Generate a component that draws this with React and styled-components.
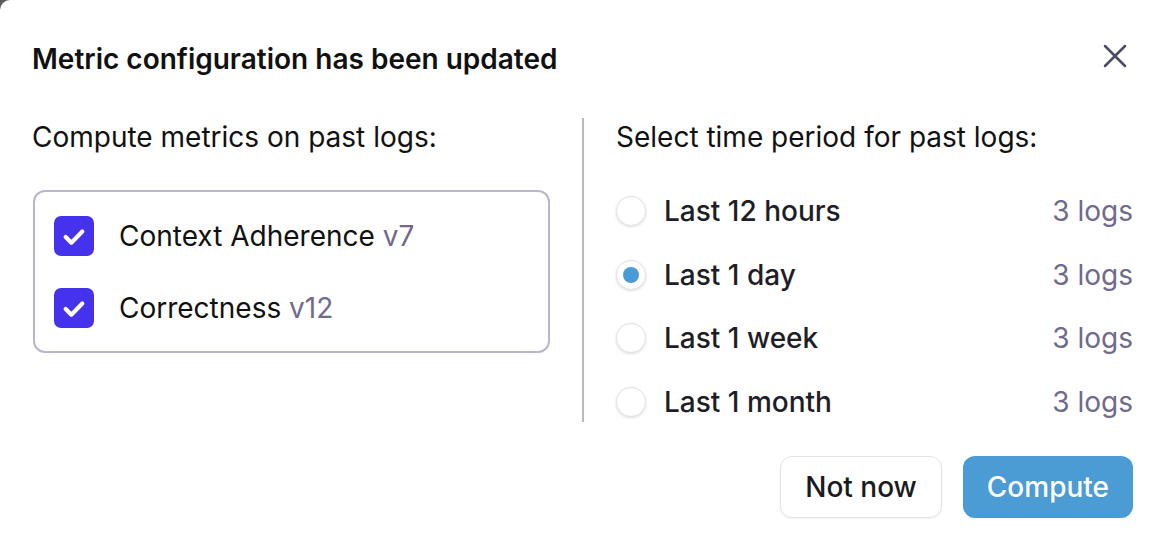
import React, {useState} from 'react'
import styled, {createGlobalStyle} from 'styled-components'

const GlobalStyle = createGlobalStyle`
  html, body {
    margin: 0;
    padding: 0;
    background: #5c5c5c;
  }
  body {
    font-family: Inter, "Noto Sans", sans-serif;
    -webkit-font-smoothing: antialiased;
  }
`

const Modal = styled.div`
  background: #fff;
  border-top-left-radius: 10px;
  box-sizing: border-box;
  height: 546px;
  padding: 41px 29px 28px 32px;
  width: 1162px;
`

const Header = styled.div`
  align-items: center;
  display: flex;
  height: 36px;
  justify-content: space-between;
`

const Title = styled.h2`
  color: #111;
  font-size: 28px;
  font-weight: 600;
  line-height: 34px;
  margin: 0;
`

const CloseButton = styled.button`
  align-items: center;
  background: none;
  border: 0;
  color: #4a4a62;
  cursor: pointer;
  display: flex;
  height: 36px;
  justify-content: center;
  margin-bottom: 6px;
  padding: 0;
  width: 36px;
`

const Columns = styled.div`
  display: grid;
  grid-template-columns: 518px 2px 1fr;
  column-gap: 32px;
  height: 304px;
  margin-top: 41px;
`

const Column = styled.div`
  display: flex;
  flex-direction: column;
`

const Divider = styled.div`
  background: #b8b6cc;
  width: 2px;
`

const Heading = styled.p`
  color: #111;
  font-size: 28px;
  font-weight: 400;
  line-height: 38px;
  margin: 0;
`

const MetricBox = styled.div`
  border: 2px solid #b8b6cc;
  border-radius: 12px;
  display: flex;
  flex-direction: column;
  gap: 32px;
  margin-left: 1px;
  margin-top: 34px;
  padding: 24px 19px 23px;
`

const MetricRow = styled.label`
  align-items: center;
  cursor: pointer;
  display: flex;
  gap: 25px;
  height: 40px;
`

const CheckBox = styled.span`
  align-items: center;
  background: #4532ec;
  border-radius: 7px;
  display: flex;
  flex-shrink: 0;
  height: 40px;
  justify-content: center;
  width: 40px;
`

const MetricName = styled.span`
  color: #111;
  font-size: 28px;
  line-height: 34px;
`

const Version = styled.span`
  color: #6f6b8c;
`

const PeriodList = styled.div`
  display: flex;
  flex-direction: column;
  gap: 23.5px;
  margin-top: 35px;
`

const PeriodRow = styled.label`
  align-items: center;
  cursor: pointer;
  display: flex;
  height: 40px;
`

const Radio = styled.span`
  align-items: center;
  background: #fff;
  border: 1px solid #e4e4e8;
  border-radius: 50%;
  box-shadow: 0 1px 3px rgba(0, 0, 0, 0.14);
  box-sizing: border-box;
  display: flex;
  flex-shrink: 0;
  height: 30px;
  justify-content: center;
  width: 30px;

  &::after {
    background: #4a9ad6;
    border-radius: 50%;
    content: '';
    display: ${p => (p.$checked ? 'block' : 'none')};
    height: 16px;
    width: 16px;
  }
`

const PeriodName = styled.span`
  color: #1e1e28;
  flex: 1;
  font-size: 28px;
  font-weight: 500;
  line-height: 34px;
  margin-left: 18px;
`

const LogCount = styled.span`
  color: #6f6b8c;
  font-size: 28px;
  line-height: 34px;
`

const Footer = styled.div`
  display: flex;
  gap: 21px;
  justify-content: flex-end;
  margin-top: 34px;
`

const Button = styled.button`
  background: ${p => (p.$primary ? '#4b9bd5' : '#fff')};
  border: ${p => (p.$primary ? '0' : '1.5px solid #e4e4e4')};
  border-radius: 12px;
  box-shadow: ${p => (p.$primary ? 'none' : '0 1px 2px rgba(0, 0, 0, 0.06)')};
  color: ${p => (p.$primary ? '#fff' : '#1a1a1f')};
  cursor: pointer;
  font-family: inherit;
  font-size: 28px;
  font-weight: 500;
  height: 62px;
  padding: 0 ${p => (p.$primary ? '24px' : '24px')};
`

const metrics = [
  {name: 'Context Adherence', version: 'v7'},
  {name: 'Correctness', version: 'v12'}
]

const periods = ['Last 12 hours', 'Last 1 day', 'Last 1 week', 'Last 1 month']

const Check = () => (
  <svg width='40' height='40' viewBox='0 0 24 24' fill='none'>
    <path d='M7 12.6l3.4 3.4L17 9.3' stroke='#fff' strokeWidth='2.5' strokeLinecap='round' strokeLinejoin='round' />
  </svg>
)

const CloseIcon = () => (
  <svg width='24' height='24' viewBox='0 0 24 24' fill='none'>
    <path d='M2 2l20 20M22 2L2 22' stroke='currentColor' strokeWidth='2.5' strokeLinecap='round' />
  </svg>
)

let App = () => {
  let [period, setPeriod] = useState(1)

  return (
    <>
      <GlobalStyle />
      <Modal>
        <Header>
          <Title>Metric configuration has been updated</Title>
          <CloseButton aria-label='Close'><CloseIcon /></CloseButton>
        </Header>
        <Columns>
          <Column>
            <Heading>Compute metrics on past logs:</Heading>
            <MetricBox>
              {metrics.map(m => (
                <MetricRow key={m.name}>
                  <CheckBox><Check /></CheckBox>
                  <MetricName>{m.name} <Version>{m.version}</Version></MetricName>
                </MetricRow>
              ))}
            </MetricBox>
          </Column>
          <Divider />
          <Column>
            <Heading>Select time period for past logs:</Heading>
            <PeriodList>
              {periods.map((p, i) => (
                <PeriodRow key={p} onClick={() => setPeriod(i)}>
                  <Radio $checked={period === i} />
                  <PeriodName>{p}</PeriodName>
                  <LogCount>3 logs</LogCount>
                </PeriodRow>
              ))}
            </PeriodList>
          </Column>
        </Columns>
        <Footer>
          <Button>Not now</Button>
          <Button $primary>Compute</Button>
        </Footer>
      </Modal>
    </>
  )
}

export default App
